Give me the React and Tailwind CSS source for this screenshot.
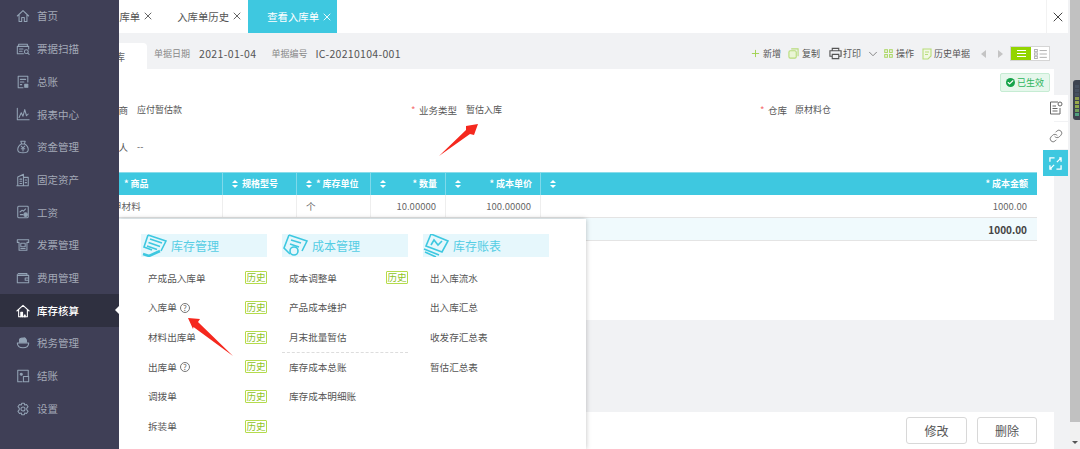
import React from "react";
import { X, ChevronDown, Plus, Link as LinkIcon, Check } from "lucide-react";

const S = ({ children, className = "w-[14px] h-[14px]" }) => (
  <svg viewBox="0 0 16 16" fill="none" stroke="currentColor" strokeWidth="1.2" strokeLinejoin="round" strokeLinecap="round" className={className}>{children}</svg>
);

const icons = [
  <S><path d="M1.5 8 8 1.8 14.5 8M3.5 6.5V14.2H6.5V9.8H9.5V14.2H12.5V6.5" /></S>,
  <S><path d="M3 5V2.5H13V5M1.5 5H14.5V8M1.5 5V13.5H8.5M4 8H8M4 10.5H7" /><circle cx="11.8" cy="11" r="2.2" /><path d="M13.4 12.6 15 14.2" /></S>,
  <S><path d="M2.5 14.5V1.5H13.5V8M2.5 14.5H8M5 5H11M5 8H9M5 11H6.5" /><rect x="10" y="10.5" width="3.5" height="3.5" fill="currentColor" /></S>,
  <S><path d="M1.5 1.5V14.5H15M3.5 12 6 6.5 8 10.5 10 3 12 10 14 8" /></S>,
  <S><path d="M5.5 1.5H10.5L9.5 4.5H6.5ZM6 4.5C3.5 6 2 8.5 2 11C2 13.5 4 14.5 8 14.5S14 13.5 14 11C14 8.5 12.5 6 10 4.5M6 7 8 9 10 7M8 9V12.5M6 10H10" /></S>,
  <S><path d="M2 14.5V4.5L8.5 1.5V14.5M8.5 5H14V14.5H1M4.5 7H6.5M4.5 9.5H6.5M4.5 12H6.5M10.5 8H12M10.5 11H12" /></S>,
  <S><rect x="2" y="1.5" width="12" height="13" rx="1" /><path d="M4.5 8 7 6 8.5 7 11 4.5M5 11H8" /><circle cx="11" cy="11" r="2" fill="currentColor" /></S>,
  <S><path d="M1.5 2H14.5V5H12.5V14H3.5V5H1.5ZM5.5 6H10.5V10H5.5ZM5.5 12H10.5" /></S>,
  <S><path d="M2.5 3H12.5V5M1.5 4V13.5H14.5V5H2.5M14.5 8H10.5V10.5H14.5" /></S>,
  <S><path d="M1 8 8 1.5 15 8M3 6.5V14.5H13V6.5" /><path d="M5.5 14.5V9.5H7.5V14.5M9.5 12.5H10.5V14.5H9.5Z" fill="currentColor" /></S>,
  <S><path d="M4 7V4.5C4 3 6 2 8 2.5 10 1.5 12.5 3 12 7Z" fill="currentColor" /><path d="M1.5 8H14.5C14.5 11.5 12 13.5 8 13.5S1.5 11.5 1.5 8Z" /></S>,
  <S><path d="M7 14.5H2V1.5H14V8" /><rect x="8.5" y="8.5" width="6" height="6" /><circle cx="6" cy="6" r="1.2" fill="currentColor" /></S>,
  <S><circle cx="8" cy="8" r="2.3" /><path d="M6.5 1.5H9.5L10 3.5 12 2.8 13.8 5.4 12.3 7 12.3 9 13.8 10.6 12 13.2 10 12.5 9.5 14.5H6.5L6 12.5 4 13.2 2.2 10.6 3.7 9 3.7 7 2.2 5.4 4 2.8 6 3.5Z" /></S>,
];
const navItems = ["首页", "票据扫描", "总账", "报表中心", "资金管理", "固定资产", "工资", "发票管理", "费用管理", "库存核算", "税务管理", "结账", "设置"];

const Sort = () => (
  <span className="flex flex-col gap-[2px] shrink-0">
    <span className="w-0 h-0 border-x-[3.5px] border-x-transparent border-b-[3.5px] border-b-white" />
    <span className="w-0 h-0 border-x-[3.5px] border-x-transparent border-t-[3.5px] border-t-white" />
  </span>
);

const HCell = ({ t, right }) => (
  <div className="flex items-center justify-between pl-[9px] pr-[8px] border-r border-[#7fd9ea]">
    <Sort />
    <span className={`font-bold text-[9px] text-white ${right ? "" : "flex-1 pl-[4px]"}`}>{t}</span>
  </div>
);

const Tag = () => (
  <span className="w-[22px] h-[13px] border border-[#b5dc4c] rounded-[1px] text-[#8fc31f] text-[9.6px] leading-[11px] text-center shrink-0">历史</span>
);
const Help = () => (
  <span className="w-[10px] h-[10px] rounded-full border border-[#777] text-[8px] leading-[8px] text-center text-[#666] inline-block ml-[3px]">?</span>
);

const MenuRow = ({ t, tag, help }) => (
  <div className="h-[29.7px] flex items-center justify-between pl-[7px] text-[9.6px] text-[#555]">
    <span className="flex items-center">{t}{help && <Help />}</span>
    {tag && <Tag />}
  </div>
);

const menuIcon = (kind) => (
  <svg viewBox="0 0 26 23" fill="none" stroke="#3ec8e0" strokeWidth="1.6" className="w-[26px] h-[23px] shrink-0">
    {kind === 0 && <><path d="M7 1 25 7 20 17M7 1 3 13 11 16" /><path d="M9 5 21 9M7.5 8.5 19 12.5M6 12 16 15.5" /><path d="M2 20 8 22 19 17" strokeWidth="2.6" /></>}
    {kind === 1 && <><path d="M7 1 25 7 20 17M7 1 2 14 8 20" /><path d="M9 6 19 9M8 10 17 13" /><circle cx="12" cy="17" r="4" /></>}
    {kind === 2 && <><path d="M8 0 25 7 19 18 3 12Z" /><path d="M8 11 11 6 15 11 19 7" /><path d="M1 15 16 21M2 18 13 23" /></>}
  </svg>
);

const MenuCol = ({ kind, title, rows }) => (
  <div className="w-[126px]">
    <div className="h-[23px] bg-[#e6f7fc] flex items-center gap-[4px] overflow-hidden">
      {menuIcon(kind)}
      <span className="text-[12px] text-[#55cde4]">{title}</span>
    </div>
    <div className="mt-[6px]">{rows}</div>
  </div>
);

export default function App() {
  return (
    <div className="relative flex w-[1080px] h-[449px] overflow-hidden bg-[#f1f2f4] text-[#555] font-['Noto_Sans_CJK_SC','Noto_Sans',sans-serif]">
      {/* sidebar */}
      <aside className="relative z-20 w-[119px] shrink-0 bg-[#3f3f56] flex flex-col">
        {navItems.map((n, i) => (
          <div key={n} className={`relative h-[32.7px] shrink-0 flex items-center pl-[16px] gap-[7px] text-[10.5px] ${i === 9 ? "bg-[#2f3040] text-white font-medium" : "text-[#a3a9b6]"}`}>
            <span className={i === 9 ? "text-white" : "text-[#93a3b5]"}>{icons[i]}</span>
            {n}
            {i === 9 && <span className="absolute right-0 top-[12px] w-0 h-0 border-y-[4px] border-y-transparent border-r-[4px] border-r-white" />}
          </div>
        ))}
      </aside>

      {/* main */}
      <main className="w-[951px] shrink-0 flex flex-col">
        {/* tabs */}
        <div className="h-[33px] shrink-0 bg-white flex items-center mr-[2px] text-[10.4px] text-[#555]">
          <div className="-ml-[10px] flex items-center"><span>入库单</span><X className="ml-[2px] w-[12px] h-[12px]" strokeWidth={1.8} /></div>
          <div className="ml-[23px] flex items-center"><span>入库单历史</span><X className="ml-[2px] w-[12px] h-[12px]" strokeWidth={1.8} /></div>
          <div className="ml-[5px] w-[89px] h-full bg-[#3ec8e0] text-white flex items-center pl-[19px]"><span>查看入库单</span><X className="ml-[2px] w-[12px] h-[12px]" strokeWidth={1.8} /></div>
          <div className="ml-auto w-[22px] h-full border-l border-[#f2f2f2] flex items-center justify-center"><X className="w-[16px] h-[16px] text-[#444]" strokeWidth={1.5} /></div>
        </div>

        {/* toolbar */}
        <div className="h-[36px] shrink-0 flex items-end mr-[16px] pr-[4px] text-[9px]">
          <div className="-ml-[19px] w-[47px] h-[26px] bg-white rounded-t-[4px] flex items-center justify-end pr-[22px] text-[10px] text-[#666]">入库</div>
          <div className="flex-1 h-full flex items-center pt-[5px]">
            <span className="ml-[7px] text-[#888]">单据日期</span>
            <span className="ml-[9px] text-[10.5px] tracking-[0.35px] text-[#555]">2021-01-04</span>
            <span className="ml-[15px] text-[#888]">单据编号</span>
            <span className="ml-[8px] text-[10.5px] tracking-[0.3px] text-[#555]">IC-20210104-001</span>
            <div className="ml-auto flex items-center text-[#555]">
              <Plus className="w-[11px] h-[11px] text-[#9fd14b]" strokeWidth={2} />
              <span className="ml-[2px]">新增</span>
              <svg viewBox="0 0 12 12" fill="none" stroke="#b7dc7a" strokeWidth="1.2" className="ml-[7px] w-[11px] h-[11px]"><rect x="1" y="3" width="8" height="8" rx="1.5" fill="#eaf5d5" /><path d="M3.5 1H11V9" /></svg>
              <span className="ml-[3px]">复制</span>
              <svg viewBox="0 0 14 14" fill="none" stroke="#555" strokeWidth="1.2" className="ml-[9px] w-[13px] h-[13px]"><path d="M3.5 4V1.5H10.5V4M3.5 10H1V4H13V10H10.5M3.5 8H10.5V12.5H3.5Z" /></svg>
              <span className="ml-[1px]">打印</span>
              <ChevronDown className="ml-[5px] w-[14px] h-[14px] text-[#777]" strokeWidth={1.5} />
              <svg viewBox="0 0 10 10" fill="none" stroke="#a9d75e" strokeWidth="1.1" className="ml-[4px] w-[9px] h-[9px]"><rect x="0.8" y="0.8" width="3" height="3" /><rect x="6.2" y="0.8" width="3" height="3" /><rect x="0.8" y="6.2" width="3" height="3" /><rect x="6.2" y="6.2" width="3" height="3" /></svg>
              <span className="ml-[3px]">操作</span>
              <svg viewBox="0 0 10 12" fill="none" stroke="#b7dc7a" strokeWidth="1.1" className="ml-[8px] w-[10px] h-[12px]"><path d="M1 1H9V8L6 11H1ZM3 4H7M3 6.5H6" fill="#f1f8e3" /></svg>
              <span className="ml-[2px]">历史单据</span>
              <span className="ml-[11px] w-0 h-0 border-y-[4px] border-y-transparent border-r-[5px] border-r-[#c4c4c4]" />
              <span className="ml-[12px] w-0 h-0 border-y-[4px] border-y-transparent border-l-[5px] border-l-[#c4c4c4]" />
              <div className="ml-[7px] w-[40px] h-[15px] flex border border-[#d5d5d5]">
                <span className="w-[20px] bg-[#93d500] flex flex-col items-center justify-center gap-[2px]">
                  <i className="block w-[9px] h-[1px] bg-white" /><i className="block w-[9px] h-[1px] bg-white" /><i className="block w-[9px] h-[1px] bg-white" />
                </span>
                <span className="flex-1 bg-white flex items-center justify-center">
                  <svg viewBox="0 0 14 11" fill="none" stroke="#aaa" className="w-[13px] h-[10px]"><rect x="0.5" y="0.5" width="3" height="2.5" /><rect x="0.5" y="4.3" width="3" height="2.5" /><rect x="0.5" y="8" width="3" height="2.5" /><path d="M6 1.7H14M6 5.5H14M6 9.2H14" /></svg>
                </span>
              </div>
            </div>
          </div>
        </div>

        {/* card */}
        <div className="h-[251px] shrink-0 bg-white mr-[16px] flex flex-col">
          <div className="h-[23px] shrink-0 flex justify-end items-end pr-[4px]">
            <span className="w-[50px] h-[19px] bg-[#e6f7ec] border border-[#c6ecd3] rounded-[2px] flex items-center justify-center gap-[2px] text-[9px] text-[#2db55d]">
              <span className="w-[9px] h-[9px] rounded-full bg-[#16a34a] flex items-center justify-center"><Check className="w-[7px] h-[7px] text-white" strokeWidth={4} /></span>
              已生效
            </span>
          </div>
          <div className="h-[36px] shrink-0 -ml-[57px] grid grid-cols-[349px_349px_349px] items-center text-[9.5px] leading-[14px]">
            <div className="pl-[37.5px] flex items-center"><span>供应商</span><span className="ml-[9px] text-[9px]">应付暂估款</span></div>
            <div className="flex items-center"><span className="text-[#f56c6c] w-[8px]">*</span><span>业务类型</span><span className="ml-[9px] text-[9px]">暂估入库</span></div>
            <div className="flex items-center"><span className="text-[#f56c6c] w-[8px]">*</span><span>仓库</span><span className="ml-[8px] text-[9px]">原材料仓</span></div>
          </div>
          <div className="h-[38px] shrink-0 -ml-[57px] pl-[37.5px] flex items-center text-[9.5px] leading-[14px]">
            <span>入库人</span><span className="ml-[9px] text-[9px]">--</span>
          </div>

          {/* table */}
          <div className="mt-[6px] -ml-[19px] mr-[17px] grid grid-cols-[123px_74px_74px_75px_95px_1fr] text-[9.6px]">
            <div className="h-[23px] col-span-6 grid grid-cols-subgrid bg-[#3ec8e0] border-t border-[#8adcea]">
              <div className="flex items-center pl-[24px] border-r border-[#7fd9ea] font-bold text-[9px] text-white">* 商品</div>
              <HCell t="规格型号" />
              <HCell t="* 库存单位" />
              <HCell t="* 数量" right />
              <HCell t="* 成本单价" right />
              <div className="flex items-center justify-between pl-[9px] pr-[9px]"><Sort /><span className="font-bold text-[9px] text-white">* 成本金额</span></div>
            </div>
            <div className="h-[23px] col-span-6 grid grid-cols-subgrid border-b border-[#e4e4e4] text-[#666] items-center">
              <div className="pl-[12px] h-full flex items-center border-r border-[#eee]">甲材料</div>
              <div className="h-full border-r border-[#eee]" />
              <div className="h-full pl-[9px] flex items-center border-r border-[#eee]">个</div>
              <div className="h-full pr-[9px] flex items-center justify-end border-r border-[#eee] text-[9.5px]">10.00000</div>
              <div className="h-full pr-[9px] flex items-center justify-end border-r border-[#eee] text-[9.5px]">100.00000</div>
              <div className="h-full pr-[10px] flex items-center justify-end text-[9.5px]">1000.00</div>
            </div>
            <div className="h-[23px] col-span-6 bg-[#f0fafd] border-b border-[#e4e4e4] flex items-center justify-end pr-[10px] font-bold text-[10px] text-[#444]">1000.00</div>
          </div>
        </div>

        <div className="flex-1" />
        {/* bottom */}
        <div className="h-[37px] shrink-0 bg-white mr-[16px] flex items-start justify-end gap-[10px] pr-[17px] pt-[5px]">
          <button className="w-[61px] h-[27px] border border-[#d8d8d8] rounded-[3px] text-[12px] text-[#555]">修改</button>
          <button className="w-[60px] h-[27px] border border-[#d8d8d8] rounded-[3px] text-[12px] text-[#555]">删除</button>
        </div>
      </main>

      {/* scrollbar */}
      <div className="w-[10px] shrink-0 bg-[#f1f1f1] flex flex-col justify-between items-center">
        <div className="w-full h-[422px] bg-[#c1c1c1]" />
        <span className="mb-[5px] w-0 h-0 border-x-[3px] border-x-transparent border-t-[3px] border-t-[#555]" />
      </div>

      {/* floating side tools */}
      <div className="absolute z-10 left-[1043px] top-[95px] w-[25px] flex flex-col gap-[1px]">
        <div className="h-[26px] bg-white flex items-center justify-center text-[#666]">
          <svg viewBox="0 0 14 14" fill="none" stroke="currentColor" strokeWidth="1" className="w-[14px] h-[14px]"><path d="M9 1H1.5V13H11V7M3.5 5H7M3.5 7.5H8.5M3.5 10H8.5" /><circle cx="11" cy="3" r="2" /></svg>
        </div>
        <div className="h-[27px] bg-white flex items-center justify-center text-[#777]"><LinkIcon className="w-[14px] h-[14px]" strokeWidth={1.6} /></div>
        <div className="h-[26px] bg-[#3ec8e0] flex items-center justify-center text-white">
          <svg viewBox="0 0 14 14" fill="none" stroke="currentColor" strokeWidth="1.4" className="w-[13px] h-[13px]"><path d="M1 5V1H6M8 13H13V9M1 9V13H3M13 5V1H11M8.5 5.5 12.5 1.5M5.5 8.5 1.5 12.5" /></svg>
        </div>
      </div>

      {/* speed widget */}
      <div className="absolute z-10 left-[1073px] top-[80px] w-[7px] h-[40px] bg-[#3d4350] rounded-l-[3px] flex flex-col gap-[1px] pt-[5px] pl-[2px]">
        {["#465060", "#465060", "#465060", "#8a9a4a", "#9aa84a", "#8ea84a", "#6f9f5a", "#4f9f80"].map((c, i) => <i key={i} className="block w-[4px] h-[3px]" style={{ background: c }} />)}
      </div>

      {/* popup menu */}
      <div className="absolute z-10 left-[119px] top-[219px] w-[467px] h-[230px] bg-white shadow-[0_0_5px_rgba(0,0,0,0.25)] pl-[22px] pt-[15px] flex gap-[15px]">
        <MenuCol kind={0} title="库存管理" rows={<>
          <MenuRow t="产成品入库单" tag />
          <MenuRow t="入库单" tag help />
          <MenuRow t="材料出库单" tag />
          <MenuRow t="出库单" tag help />
          <MenuRow t="调拨单" tag />
          <MenuRow t="拆装单" tag />
        </>} />
        <MenuCol kind={1} title="成本管理" rows={<>
          <MenuRow t="成本调整单" tag />
          <MenuRow t="产品成本维护" />
          <MenuRow t="月末批量暂估" />
          <div className="border-t border-dashed border-[#ddd] -mb-[1px]" />
          <MenuRow t="库存成本总账" />
          <MenuRow t="库存成本明细账" />
        </>} />
        <MenuCol kind={2} title="库存账表" rows={<>
          <MenuRow t="出入库流水" />
          <MenuRow t="出入库汇总" />
          <MenuRow t="收发存汇总表" />
          <MenuRow t="暂估汇总表" />
        </>} />
      </div>

      {/* annotation arrows */}
      <svg viewBox="0 0 40 33" className="absolute z-30 left-[439px] top-[124px] w-[40px] h-[33px]"><polygon points="0,32 27,6 27,2 39,0 35,11 31,10" fill="#f5281e" /></svg>
      <svg viewBox="0 0 46 39" className="absolute z-30 left-[188px] top-[318px] w-[46px] h-[39px]"><polygon points="0,0 12,1 10,4 45,38 5.5,9 5,11" fill="#f5281e" /></svg>
    </div>
  );
}
